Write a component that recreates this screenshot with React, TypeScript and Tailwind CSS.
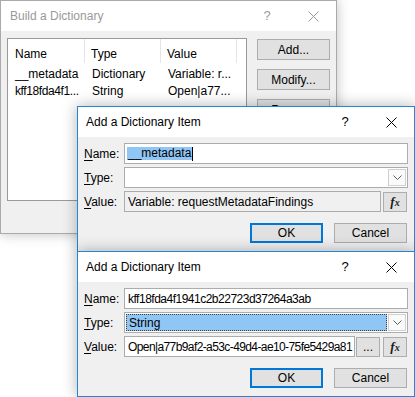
import React from "react";

function CloseIcon({ color }: { color: string }) {
  return (
    <svg width="11" height="11" viewBox="0 0 11 11" style={{ color }}>
      <path d="M0.5 0.5L10.5 10.5M10.5 0.5L0.5 10.5" stroke="currentColor" strokeWidth="1" fill="none" />
    </svg>
  );
}

function Chevron() {
  return (
    <svg width="9" height="5" viewBox="0 0 9 5">
      <path d="M0.5 0.5L4.5 4.5L8.5 0.5" stroke="#606060" strokeWidth="1" fill="none" />
    </svg>
  );
}

function Fx() {
  return (
    <span className="font-['Liberation_Serif',serif] italic font-bold text-[13px] leading-none text-[#1a1a1a]">
      f<span className="text-[10px]">x</span>
    </span>
  );
}

function Label({ k, rest }: { k: string; rest: string }) {
  return (
    <div className="w-[40px] shrink-0">
      <span className="underline underline-offset-[2px]">{k}</span>
      {rest}
    </div>
  );
}

function AddDialog({ top, second }: { top: string; second?: boolean }) {
  return (
    <div
      className={`absolute left-[77px] ${top} w-[338px] h-[146px] border border-[#2585d8] bg-[#f0f0f0] shadow-[0_0_14px_rgba(0,0,0,0.3)] flex flex-col`}
    >
      <div className="h-[30px] bg-white flex items-center shrink-0">
        <div className="flex-1 pl-[8px]">Add a Dictionary Item</div>
        <div className="w-[46px] h-full flex items-center justify-center text-[13px]">?</div>
        <div className="w-[46px] h-full flex items-center justify-center">
          <CloseIcon color="#000" />
        </div>
      </div>
      <div className="flex-1 flex flex-col pt-[6px] px-[6px]">
        <div className="flex items-center h-[21px]">
          <Label k="N" rest="ame:" />
          <div className="flex-1 h-full border border-[#acacac] bg-white flex items-center pl-[2px] overflow-hidden whitespace-nowrap">
            {second ? (
              <span className="pl-[1px] tracking-[-0.5px]">kff18fda4f1941c2b22723d37264a3ab</span>
            ) : (
              <>
                <span className="bg-[#90c6f6] pl-[1px] pr-[1px] leading-[13px]">__metadata</span>
                <span className="w-[1px] h-[14px] bg-black" />
              </>
            )}
          </div>
        </div>
        <div className="flex items-center h-[21px] mt-[3px]">
          <Label k="T" rest="ype:" />
          <div className="flex-1 h-full border border-[#acacac] bg-white flex p-[1px]">
            <div className="flex-1 flex items-center">
              {second ? (
                <div className="w-full h-full bg-[#90c6f6] border border-dotted border-[#4a3a2a] flex items-center pl-[2px]">
                  String
                </div>
              ) : null}
            </div>
            <div className="w-[18px] ml-[1px] border border-[#d0d0d0] bg-[#fafafa] flex items-center justify-center">
              <Chevron />
            </div>
          </div>
        </div>
        <div className="flex items-center h-[21px] mt-[3px]">
          <Label k="V" rest="alue:" />
          {second ? (
            <>
              <div className="flex-1 h-full border border-[#acacac] bg-white flex items-center pl-[3px] overflow-hidden whitespace-nowrap">
                <span className="tracking-[-0.6px]">Open|a77b9af2-a53c-49d4-ae10-75fe5429a81</span>
              </div>
              <div className="w-[24px] h-[20px] ml-[1px] border border-[#adadad] bg-[#e1e1e1] flex items-center justify-center">
                ...
              </div>
              <div className="w-[24px] h-[20px] ml-[3px] mr-[1px] border border-[#adadad] bg-[#e1e1e1] flex items-center justify-center">
                <Fx />
              </div>
            </>
          ) : (
            <>
              <div className="flex-1 h-full border border-[#acacac] bg-[#f0f0f0] flex items-center pl-[3px] overflow-hidden whitespace-nowrap">
                Variable: requestMetadataFindings
              </div>
              <div className="w-[24px] h-[20px] ml-[2px] mr-[1px] border border-[#adadad] bg-[#e1e1e1] flex items-center justify-center">
                <Fx />
              </div>
            </>
          )}
        </div>
        <div className="flex justify-end gap-[11px] mt-[11px] mr-[1px]">
          <div className="w-[73px] h-[20px] border-2 border-[#0078d7] bg-[#e1e1e1] flex items-center justify-center">OK</div>
          <div className="w-[73px] h-[20px] border border-[#adadad] bg-[#e1e1e1] flex items-center justify-center">Cancel</div>
        </div>
      </div>
    </div>
  );
}

export default function App() {
  return (
    <div className="relative w-[415px] h-[397px] bg-white overflow-hidden font-['Liberation_Sans',sans-serif] text-[12px] text-black">
      {/* Build a Dictionary */}
      <div className="absolute left-0 top-0 w-[337px] h-[234px] border border-[#aaaaaa] bg-[#f0f0f0] shadow-[0_0_12px_rgba(0,0,0,0.25)] flex flex-col">
        <div className="h-[30px] bg-white flex items-center shrink-0 text-[#999999]">
          <div className="flex-1 pl-[9px]">Build a Dictionary</div>
          <div className="w-[46px] h-full flex items-center justify-center text-[13px]">?</div>
          <div className="w-[46px] h-full flex items-center justify-center">
            <CloseIcon color="#999999" />
          </div>
        </div>
        <div className="flex-1 flex pt-[7px] px-[6px]">
          <div className="w-[240px] h-[163px] border border-[#9a9a9a] bg-white flex flex-col">
            <div className="flex h-[24px]">
              <div className="w-[77px] border-r border-[#e5e5e5] pl-[7px] pt-[6px]">Name</div>
              <div className="w-[76px] border-r border-[#e5e5e5] pl-[6px] pt-[6px]">Type</div>
              <div className="w-[76px] border-r border-[#e5e5e5] pl-[6px] pt-[6px]">Value</div>
            </div>
            <div className="flex h-[17px] items-center mt-[2px] whitespace-nowrap">
              <div className="w-[77px] pl-[7px]">__metadata</div>
              <div className="w-[76px] pl-[7px]">Dictionary</div>
              <div className="w-[76px] pl-[7px]">Variable: r...</div>
            </div>
            <div className="flex h-[17px] items-center whitespace-nowrap">
              <div className="w-[77px] pl-[7px] tracking-[-0.4px]">kff18fda4f1...</div>
              <div className="w-[76px] pl-[7px]">String</div>
              <div className="w-[76px] pl-[7px]">Open|a77...</div>
            </div>
          </div>
          <div className="ml-[10px] pt-[1px] flex flex-col gap-[9px]">
            <div className="w-[73px] h-[21px] border border-[#adadad] bg-[#e1e1e1] flex items-center justify-center">Add...</div>
            <div className="w-[73px] h-[21px] border border-[#adadad] bg-[#e1e1e1] flex items-center justify-center">Modify...</div>
            <div className="w-[73px] h-[21px] border border-[#adadad] bg-[#e1e1e1] flex items-center justify-center">Remove</div>
          </div>
        </div>
      </div>

      <AddDialog top="top-[106px]" />
      <AddDialog top="top-[251px]" second />
    </div>
  );
}
